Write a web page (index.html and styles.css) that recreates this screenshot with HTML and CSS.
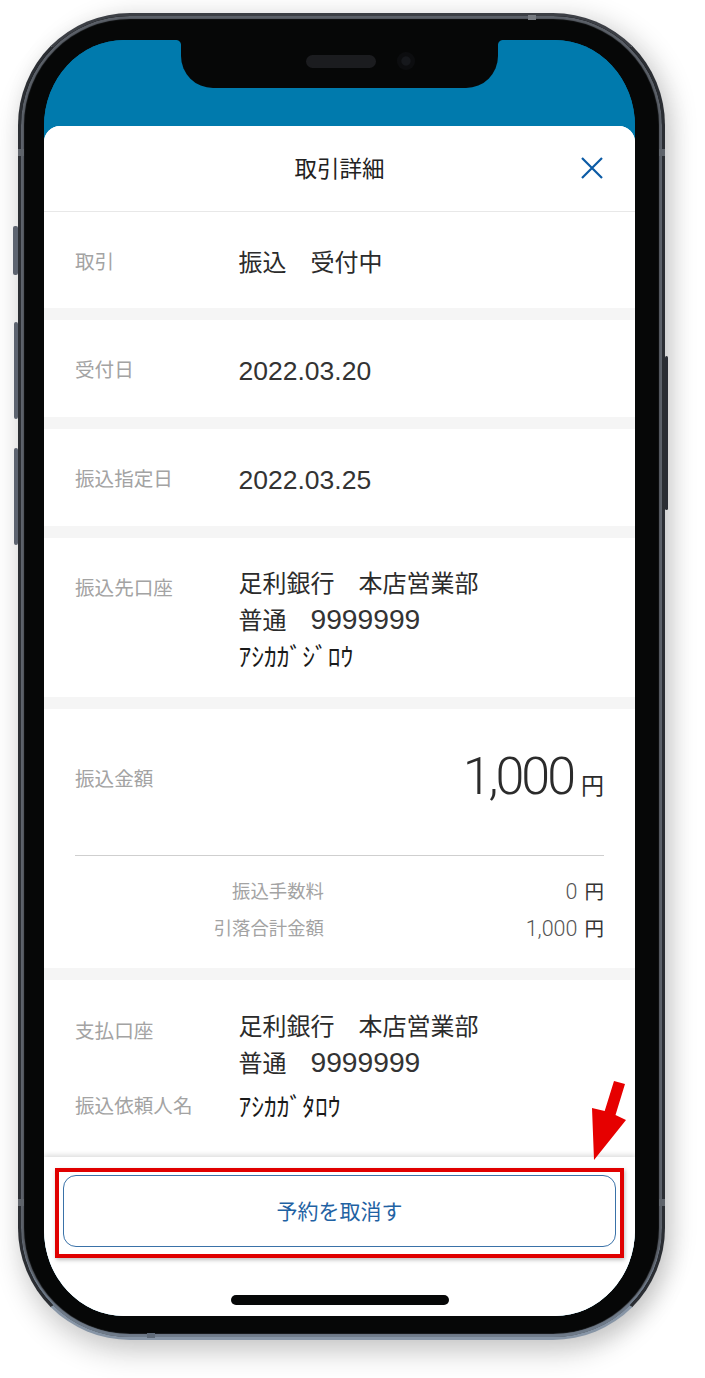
FILE: index.html
```html
<!DOCTYPE html>
<html lang="ja">
<head>
<meta charset="utf-8">
<title>取引詳細</title>
<link rel="stylesheet" href="styles.css">
</head>
<body>
<div class="phone">
  <span class="side side-mute"></span>
  <span class="side side-up"></span>
  <span class="side side-down"></span>
  <span class="side side-power"></span>
  <span class="band band-lt"></span>
  <span class="band band-lb"></span>
  <span class="band band-rt"></span>
  <span class="band band-rb"></span>
  <span class="band band-top"></span>
  <span class="band band-bottom"></span>
  <div class="notch"><span class="speaker"></span><span class="camera"></span></div>
  <div class="screen">
    <div class="status"></div>
    <div class="sheet">
      <header class="head">
        <h1 class="title">取引詳細</h1>
        <svg class="close" viewBox="0 0 24 24" width="24" height="24" aria-label="閉じる"><path d="M2 2 L22 22 M22 2 L2 22" fill="none" stroke="#0b5aa5" stroke-width="2.2"/></svg>
      </header>
      <section class="row row-one row-first">
        <div class="label">取引</div>
        <div class="value value-jp">振込　受付中</div>
      </section>
      <section class="row row-one">
        <div class="label">受付日</div>
        <div class="value date">2022.03.20</div>
      </section>
      <section class="row row-one">
        <div class="label">振込指定日</div>
        <div class="value date">2022.03.25</div>
      </section>
      <section class="row row-acct">
        <div class="label">振込先口座</div>
        <div class="value">
          <div class="line">足利銀行　本店営業部</div>
          <div class="line">普通　<span class="acct">9999999</span></div>
          <div class="line kana">ｱｼｶｶﾞｼﾞﾛｳ</div>
        </div>
      </section>
      <section class="amount">
        <div class="amount-main">
          <div class="label">振込金額</div>
          <div class="big"><span class="big-num">1,000</span><span class="big-yen">円</span></div>
        </div>
        <div class="sub-list">
          <div class="sub"><span class="sub-label">振込手数料</span><span class="sub-val"><span class="sub-num">0</span><span class="sub-yen">円</span></span></div>
          <div class="sub"><span class="sub-label">引落合計金額</span><span class="sub-val"><span class="sub-num">1,000</span><span class="sub-yen">円</span></span></div>
        </div>
      </section>
      <section class="payer">
        <div class="payer-row">
          <div class="label">支払口座</div>
          <div class="value">
            <div class="line">足利銀行　本店営業部</div>
            <div class="line">普通　<span class="acct">9999999</span></div>
          </div>
        </div>
        <div class="payer-row payer-name">
          <div class="label">振込依頼人名</div>
          <div class="value kana">ｱｼｶｶﾞﾀﾛｳ</div>
        </div>
      </section>
      <footer class="foot">
        <div class="highlight"><button class="cancel" type="button">予約を取消す</button></div>
        <span class="home"></span>
      </footer>
    </div>
  </div>
</div>
<svg class="arrow" viewBox="0 0 36 82" width="36" height="82"><polygon points="22,0 33,3 23.5,34 34,39 2,79 0,27 12.7,30" fill="#e60000"/></svg>
</body>
</html>
```
FILE: styles.css
```css
* { box-sizing: border-box; }
html, body { margin: 0; padding: 0; background: #fff; }
body {
  width: 705px;
  height: 1378px;
  overflow: hidden;
  position: relative;
  font-family: Roboto, "Noto Sans CJK JP", sans-serif;
  color: #2b2b2b;
}
.phone {
  position: relative;
  width: 647px;
  height: 1327px;
  margin: 13px 0 0 18px;
  padding: 24px 27px 21px 23px;
  background: #060707;
  border-radius: 112px;
  border: 3px solid #2b2e33;
  border-top-color: #3c3f45;
  border-bottom-color: #8795a6;
  box-shadow:
    inset 0 -3px 1px #6f7b8a,
    inset 0 0 1px 3px #5b6068,
    0 16px 26px rgba(0, 0, 0, .15),
    10px 0 24px rgba(0, 0, 0, .13);
}
.side { position: absolute; background: #5d6470; border-radius: 2px; }
.side-mute { left: -8px; top: 210px; width: 5px; height: 49px; }
.side-up { left: -7px; top: 306px; width: 4px; height: 97px; }
.side-down { left: -7px; top: 432px; width: 4px; height: 97px; }
.side-power { right: -6px; top: 340px; width: 3px; height: 154px; background: #2a2d34; }
.band { position: absolute; background: #5f646b; }
.band-lt, .band-lb { left: -3px; width: 6px; height: 7px; }
.band-rt, .band-rb { right: -3px; width: 6px; height: 7px; }
.band-lt, .band-rt { top: 133px; }
.band-lb, .band-rb { top: 1183px; }
.band-top { top: -1px; left: 507px; width: 8px; height: 5px; background: #777b81; }
.band-bottom { bottom: -1px; left: 126px; width: 8px; height: 5px; background: #5f6a78; }
.notch {
  position: absolute;
  z-index: 2;
  left: 160px;
  top: 24px;
  width: 317px;
  height: 48px;
  background: #060707;
  border-radius: 0 0 32px 32px;
}
.notch::before, .notch::after {
  content: "";
  position: absolute;
  top: 0;
  width: 5px;
  height: 5px;
}
.notch::before {
  left: -5px;
  background: radial-gradient(circle at 0 100%, transparent 4.5px, #060707 5.5px);
}
.notch::after {
  right: -5px;
  background: radial-gradient(circle at 100% 100%, transparent 4.5px, #060707 5.5px);
}
.speaker {
  position: absolute;
  left: 125px;
  top: 15px;
  width: 70px;
  height: 13px;
  border-radius: 7px;
  background: #1b1c1f;
}
.camera {
  position: absolute;
  left: 216px;
  top: 12px;
  width: 18px;
  height: 18px;
  border-radius: 50%;
  background: radial-gradient(circle, #16181c 0 32%, #0c0d0f 40% 100%);
}
.screen {
  height: 1276px;
  width: 591px;
  border-radius: 80px / 86px;
  overflow: hidden;
  background: #007aad;
  display: flex;
  flex-direction: column;
}
.status { flex: 0 0 86px; background: #007aad; }
.sheet {
  flex: 1;
  min-height: 0;
  display: flex;
  flex-direction: column;
  background: #f5f5f5;
  border-radius: 16px 16px 0 0;
  overflow: hidden;
}
.head {
  flex: 0 0 86px;
  background: #fff;
  border-bottom: 1px solid #e8e8e8;
  display: flex;
  align-items: center;
  justify-content: center;
  position: relative;
}
.title {
  margin: 0;
  font-size: 22.5px;
  font-weight: 400;
  line-height: 30px;
  color: #222;
}
.close { position: absolute; right: 31px; top: 30px; }
.row, .amount, .payer { background: #fff; }
.row { display: flex; padding-left: 31px; margin-bottom: 12px; flex: none; }
.row-one { height: 97px; padding-top: 36px; }
.row-first { height: 96px; }
.row-acct { height: 159px; padding-top: 28px; }
.label {
  flex: 0 0 164px;
  font-size: 19.6px;
  line-height: 30px;
  color: #a3a3a3;
}
.value { font-size: 24px; line-height: 30px; color: #2b2b2b; margin-left: -.5px; }
.date {
  font-family: "Liberation Sans", sans-serif;
  font-size: 26.5px;
  color: #333;
}
.acct {
  font-family: "Liberation Sans", sans-serif;
  font-size: 28.2px;
  line-height: 0;
  color: #333;
}
.line { height: 36.5px; line-height: 36.5px; }
.row-acct .label { margin-top: 8px; }
.kana { font-size: 25.5px; color: #1a1a1a; }
.amount {
  flex: none;
  height: 259px;
  margin-bottom: 12px;
  padding: 0 31px;
}
.amount-main {
  height: 147px;
  border-bottom: 1px solid #cfcfcf;
  display: flex;
  justify-content: space-between;
  padding-top: 39px;
}
.amount-main .label { margin-top: 17px; }
.big { display: flex; align-items: baseline; line-height: 58px; }
.big-num { font-size: 52px; font-weight: 300; letter-spacing: -3px; }
.big-yen { font-size: 23px; margin-left: 8px; }
.sub-list { padding-top: 18px; }
.sub { display: flex; height: 36.5px; line-height: 36.5px; }
.sub-label { width: 249px; text-align: right; font-size: 18.4px; color: #a3a3a3; }
.sub-val { flex: 1; display: flex; justify-content: flex-end; align-items: baseline; color: #555; }
.sub-num { font-size: 21.5px; font-weight: 300; }
.sub-yen { font-size: 19.5px; margin-left: 7px; color: #333; }
.payer { flex: 1; min-height: 0; padding: 29px 0 0 31px; }
.payer-row { display: flex; }
.payer-row > .label { margin-top: 8px; }
.payer-name { margin-top: 10px; }
.payer-name > .label { margin-top: 0; }
.foot {
  flex: 0 0 159px;
  background: #fff;
  box-shadow: 0 -2px 5px rgba(0, 0, 0, .14);
  position: relative;
  padding: 11px 0 0 11px;
}
.highlight {
  width: 569px;
  height: 90px;
  border: 4px solid #e00000;
  padding: 3px 4px 7px;
  box-shadow: 1px 2px 4px rgba(0, 0, 0, .25);
}
.cancel {
  display: block;
  width: 100%;
  height: 100%;
  background: #fff;
  border: 1.5px solid #3a72a8;
  border-radius: 13px;
  font-family: inherit;
  font-size: 21px;
  color: #1f62a3;
  padding: 0 0 2px;
}
.home {
  display: block;
  position: absolute;
  left: 187px;
  top: 138px;
  width: 218px;
  height: 10px;
  border-radius: 5px;
  background: #060707;
}
.arrow { position: absolute; left: 592px; top: 1081px; }
```
